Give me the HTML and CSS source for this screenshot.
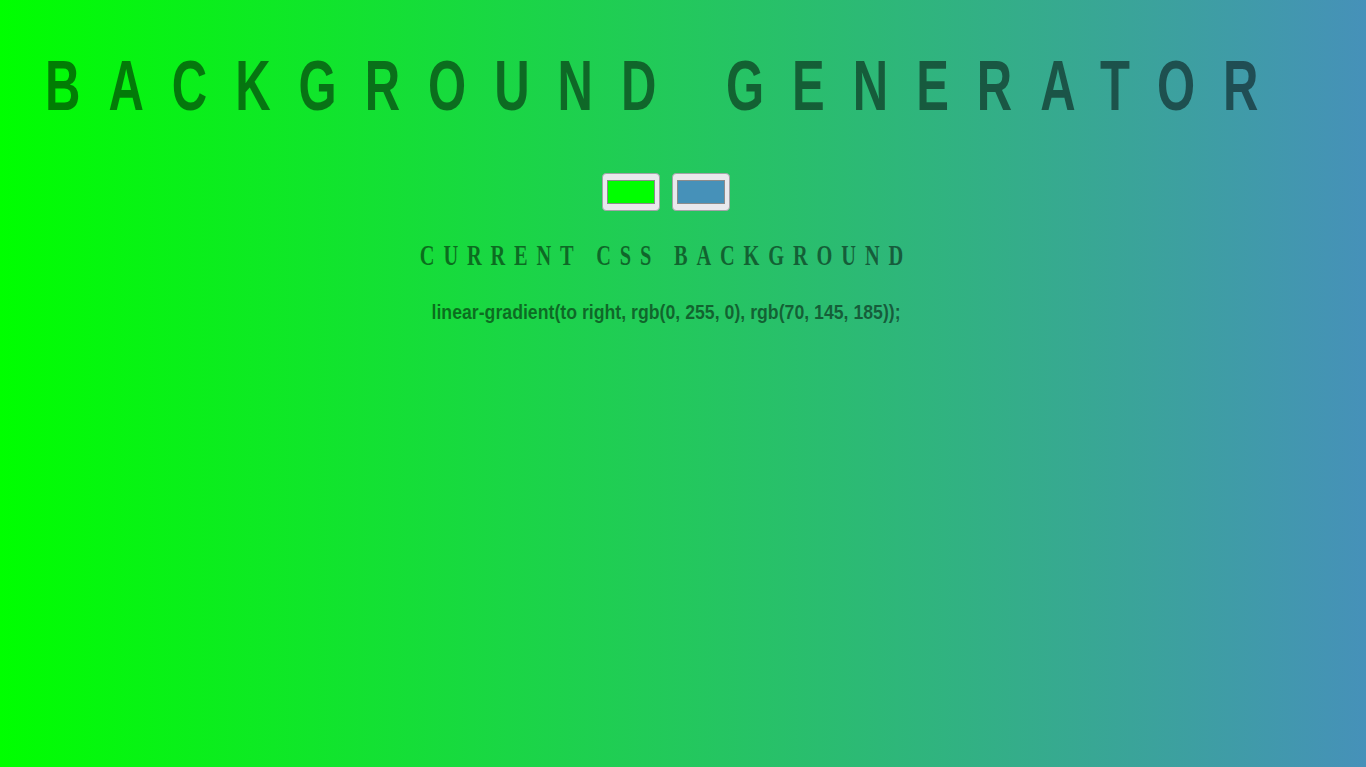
FILE: index.html
```html
<!DOCTYPE html>
<html lang="en">
<head>
<meta charset="utf-8">
<title>Background Generator</title>
<link rel="stylesheet" href="styles.css">
</head>
<body class="page">
  <main class="generator">
    <h1 class="title">Background Generator</h1>
    <div class="pickers">
      <input class="picker" type="color" name="color1" value="#00ff00">
      <input class="picker" type="color" name="color2" value="#4691b9">
    </div>
    <h3 class="label">Current CSS Background</h3>
    <p class="code">linear-gradient(to right, rgb(0, 255, 0), rgb(70, 145, 185));</p>
  </main>
</body>
</html>
```
FILE: styles.css
```css
html, body {
  margin: 0;
  padding: 0;
}

.page {
  min-height: 100vh;
  background: linear-gradient(to right, rgb(0, 255, 0), rgb(70, 145, 185));
  color: rgba(0, 0, 0, 0.5);
  overflow: hidden;
}

.generator {
  display: flex;
  flex-direction: column;
  align-items: center;
  padding-right: 34px;
  text-align: center;
}

.title {
  flex: none;
  width: max-content;
  margin: 51px 0 0;
  font: 700 70px/70px "Liberation Sans", Arial, sans-serif;
  letter-spacing: 40px;
  text-transform: uppercase;
  white-space: nowrap;
  transform: scaleX(0.7);
}

.pickers {
  display: flex;
  gap: 12px;
  margin-top: 52px;
}

.picker {
  -webkit-appearance: none;
  appearance: none;
  box-sizing: border-box;
  width: 58px;
  height: 38px;
  padding: 0;
  margin: 0;
  border: 1px solid #a3a3a8;
  border-radius: 4px;
  background: #e9e9ed;
  cursor: pointer;
}

.picker::-webkit-color-swatch-wrapper {
  padding: 6px 4px;
}

.picker::-webkit-color-swatch {
  border: 1px solid #8c8c8c;
  border-radius: 0;
}

.label {
  margin: 29px 0 0;
  font: 700 30px/30px "Liberation Serif", "Times New Roman", serif;
  letter-spacing: 13px;
  text-transform: uppercase;
  white-space: nowrap;
  transform: scaleX(0.68);
}

.code {
  margin: 32px 0 0;
  font: 700 20px/20px "Liberation Sans", Arial, sans-serif;
  white-space: nowrap;
  transform: scaleX(0.885);
}
```
